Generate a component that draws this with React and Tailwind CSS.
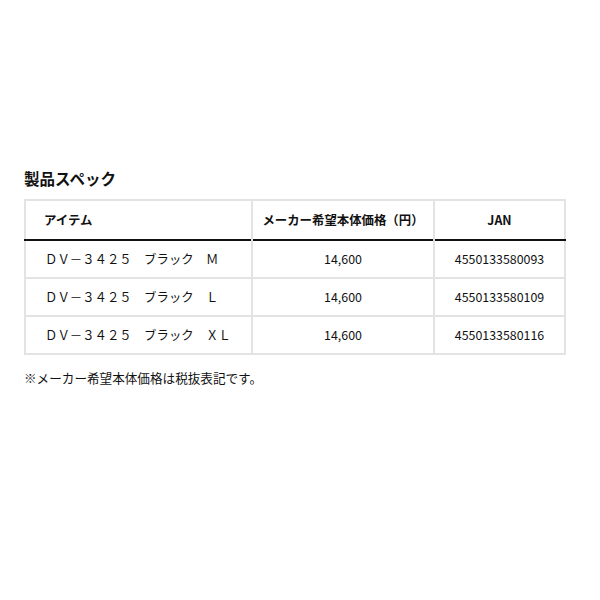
export default function App() {
  const rows = [
    ["ＤＶ－３４２５　ブラック　Ｍ", "14,600", "4550133580093"],
    ["ＤＶ－３４２５　ブラック　Ｌ", "14,600", "4550133580109"],
    ["ＤＶ－３４２５　ブラック　ＸＬ", "14,600", "4550133580116"],
  ];
  return (
    <div className="w-[600px] h-[600px] bg-white text-[#111] pt-[167px] pl-[24px]" style={{ fontFamily: '"Noto Sans CJK JP", "Noto Sans", sans-serif' }}>
      <h2 className="text-[15.5px] font-bold leading-[22px] mb-[10px]">製品スペック</h2>
      <table className="w-[542px] border-collapse border-2 border-[#e3e3e3] text-[12.4px]">
        <thead>
          <tr className="h-[40px] border-b-2 border-[#111]">
            <th className="w-[227px] text-left pl-[18px] font-bold border-r-2 border-[#e3e3e3]">アイテム</th>
            <th className="w-[182px] text-center font-bold border-r-2 border-[#e3e3e3]">メーカー希望本体価格（円）</th>
            <th className="text-center font-bold">JAN</th>
          </tr>
        </thead>
        <tbody>
          {rows.map((r, i) => (
            <tr key={i} className="h-[38px] border-t-2 border-[#e3e3e3]">
              <td className="pl-[19px] border-r-2 border-[#e3e3e3]">{r[0]}</td>
              <td className="text-center border-r-2 border-[#e3e3e3]">{r[1]}</td>
              <td className="text-center">{r[2]}</td>
            </tr>
          ))}
        </tbody>
      </table>
      <p className="text-[12.6px] mt-[14px] leading-[18px]">※メーカー希望本体価格は税抜表記です。</p>
    </div>
  );
}
